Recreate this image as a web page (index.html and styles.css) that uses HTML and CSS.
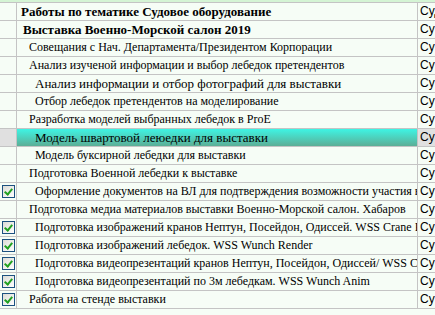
FILE: index.html
```html
<!DOCTYPE html>
<html>
  <head>
    <meta charset="UTF-8" />
    <meta name="viewport" content="width=device-width, initial-scale=1.0" />
    <link rel="stylesheet" href="styles.css">
  </head>
  <body>
    <div class="grid">
      <div class="top-strip"></div>

      <div class="row">
        <div class="check-cell"></div>
        <div class="name-cell bold lvl-0">Работы по тематике Судовое оборудование</div>
        <div class="type-cell">Суд</div>
      </div>
      <div class="row">
        <div class="check-cell"></div>
        <div class="name-cell bold lvl-1">Выставка Военно-Морской салон 2019</div>
        <div class="type-cell">Су</div>
      </div>
      <div class="row">
        <div class="check-cell"></div>
        <div class="name-cell lvl-2">Совещания с Нач. Департамента/Президентом Корпорации</div>
        <div class="type-cell">Су</div>
      </div>
      <div class="row">
        <div class="check-cell"></div>
        <div class="name-cell lvl-2">Анализ изученой информации и выбор лебедок претендентов</div>
        <div class="type-cell">Су</div>
      </div>
      <div class="row">
        <div class="check-cell"></div>
        <div class="name-cell lvl-3 wide">Анализ информации и отбор фотографий для выставки</div>
        <div class="type-cell">Су</div>
      </div>
      <div class="row">
        <div class="check-cell"></div>
        <div class="name-cell lvl-3">Отбор лебедок претендентов на моделирование</div>
        <div class="type-cell">Су</div>
      </div>
      <div class="row">
        <div class="check-cell"></div>
        <div class="name-cell lvl-2">Разработка моделей выбранных лебедок в ProE</div>
        <div class="type-cell">Су</div>
      </div>
      <div class="row selected">
        <div class="check-cell"></div>
        <div class="name-cell lvl-3 wide">Модель швартовой леюедки для выставки</div>
        <div class="type-cell">Су</div>
      </div>
      <div class="row">
        <div class="check-cell"></div>
        <div class="name-cell lvl-3">Модель буксирной лебедки для выставки</div>
        <div class="type-cell">Су</div>
      </div>
      <div class="row">
        <div class="check-cell"></div>
        <div class="name-cell lvl-2">Подготовка Военной лебедки к выставке</div>
        <div class="type-cell">Су</div>
      </div>
      <div class="row">
        <div class="check-cell"><span class="checkbox"></span></div>
        <div class="name-cell lvl-3">Оформление документов на ВЛ для подтверждения возможности участия в выставке</div>
        <div class="type-cell">Су</div>
      </div>
      <div class="row">
        <div class="check-cell"></div>
        <div class="name-cell lvl-2">Подготовка медиа материалов выставки Военно-Морской салон. Хабаров</div>
        <div class="type-cell">Су</div>
      </div>
      <div class="row">
        <div class="check-cell"><span class="checkbox"></span></div>
        <div class="name-cell lvl-3">Подготовка изображений кранов Нептун, Посейдон, Одиссей. WSS Crane Render</div>
        <div class="type-cell">Су</div>
      </div>
      <div class="row">
        <div class="check-cell"><span class="checkbox"></span></div>
        <div class="name-cell lvl-3">Подготовка изображений лебедок. WSS Wunch Render</div>
        <div class="type-cell">Су</div>
      </div>
      <div class="row">
        <div class="check-cell"><span class="checkbox"></span></div>
        <div class="name-cell lvl-3">Подготовка видеопрезентаций кранов Нептун, Посейдон, Одиссей/ WSS Crane Anim</div>
        <div class="type-cell">Су</div>
      </div>
      <div class="row">
        <div class="check-cell"><span class="checkbox"></span></div>
        <div class="name-cell lvl-3">Подготовка видеопрезентаций по 3м лебедкам. WSS Wunch Anim</div>
        <div class="type-cell">Су</div>
      </div>
      <div class="row">
        <div class="check-cell"><span class="checkbox"></span></div>
        <div class="name-cell lvl-2">Работа на стенде выставки</div>
        <div class="type-cell">Су</div>
      </div>
    </div>
  </body>
</html>
```

FILE: styles.css
```css
* {
  box-sizing: border-box;
}
body {
  margin: 0;
  background-color: #f6fdf6;
  font-family: "Liberation Serif", "Times New Roman", serif;
  font-size: 12px;
  color: #000;
}
.grid {
  width: 435px;
  overflow: hidden;
}
.top-strip {
  height: 3px;
  background-color: #d4f4d4;
  border-bottom: 1px solid #c4c4c4;
}
.row {
  display: flex;
  height: 18px;
  border-bottom: 1px solid #c4c4c4;
}
.check-cell {
  flex: 0 0 17px;
  border-right: 1px solid #c4c4c4;
  display: flex;
  align-items: center;
  padding-left: 2px;
}
.name-cell {
  flex: 0 0 401px;
  border-right: 1px solid #c4c4c4;
  white-space: nowrap;
  overflow: hidden;
  line-height: 17px;
}
.type-cell {
  flex: 1;
  min-width: 0;
  padding-left: 2px;
  font-family: "Liberation Sans", Arial, sans-serif;
  font-size: 12px;
  line-height: 17px;
  white-space: nowrap;
  overflow: hidden;
}
.bold {
  font-size: 13px;
  font-weight: bold;
}
.wide {
  font-size: 13px;
}
.lvl-0 { padding-left: 4px; }
.lvl-1 { padding-left: 6px; }
.lvl-2 { padding-left: 12px; }
.lvl-3 { padding-left: 18px; }

.selected .check-cell,
.selected .type-cell {
  background-color: #e0e0e0;
}
.selected .name-cell {
  background: linear-gradient(#3ef4e4, #5cae96);
}

/* xp style ticked checkbox */
.checkbox {
  position: relative;
  display: block;
  width: 13px;
  height: 13px;
  border: 1px solid #1c5180;
  background: linear-gradient(135deg, #dcdcd6, #ffffff);
}
.checkbox::after {
  content: "";
  position: absolute;
  left: 3px;
  top: 1px;
  width: 3px;
  height: 6px;
  border-right: 2px solid #21a121;
  border-bottom: 2px solid #21a121;
  transform: rotate(40deg);
}
```
